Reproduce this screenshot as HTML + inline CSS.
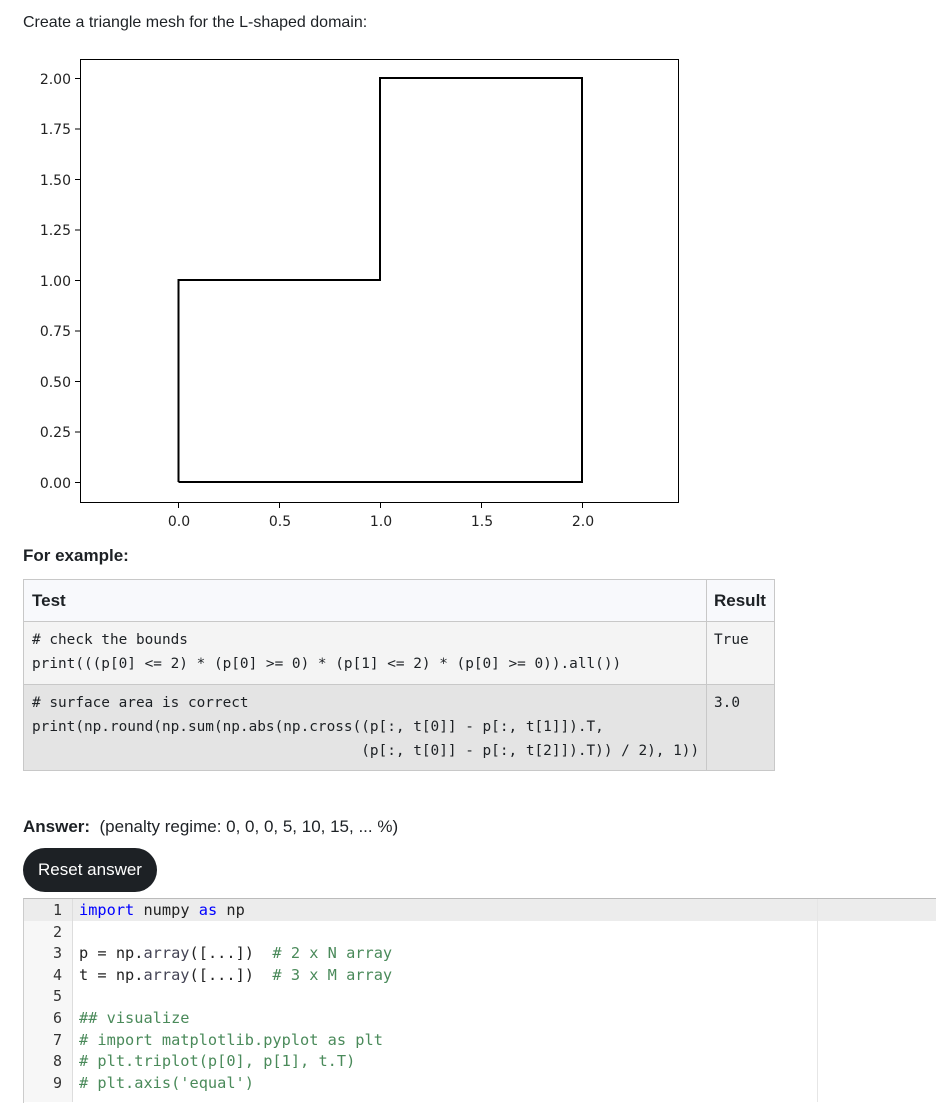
<!DOCTYPE html>
<html><head><meta charset="utf-8"><style>
body{margin:0;background:#fff;font-family:"Liberation Sans",sans-serif;color:#1d2125;width:936px;height:1102px;overflow:hidden;position:relative}
.a{position:absolute}
.mono{font-family:"DejaVu Sans Mono","Liberation Mono",monospace;font-size:14.4px}
table{border-collapse:collapse;table-layout:fixed}
td,th{overflow:hidden}
</style></head><body>
<div class="a" style="left:23px;top:14px;font-size:16px">Create a triangle mesh for the L-shaped domain:</div>
<svg class="a" style="left:0;top:50px" width="700" height="490" viewBox="0 50 700 490">
<rect x="80.5" y="59.5" width="598" height="443" fill="#fff" stroke="#000" stroke-width="1"/>
<polyline points="178.5,482 582,482 582,78 380,78 380,280 178.5,280 178.5,482" fill="none" stroke="#000" stroke-width="2"/>
<g stroke="#000" stroke-width="1">
<line x1="75" y1="78.5" x2="80" y2="78.5"/><line x1="75" y1="129" x2="80" y2="129"/><line x1="75" y1="179.5" x2="80" y2="179.5"/><line x1="75" y1="230" x2="80" y2="230"/><line x1="75" y1="280.5" x2="80" y2="280.5"/><line x1="75" y1="331" x2="80" y2="331"/><line x1="75" y1="381.5" x2="80" y2="381.5"/><line x1="75" y1="432" x2="80" y2="432"/><line x1="75" y1="482.5" x2="80" y2="482.5"/>
<line x1="178.5" y1="503" x2="178.5" y2="508"/><line x1="279.5" y1="503" x2="279.5" y2="508"/><line x1="380.5" y1="503" x2="380.5" y2="508"/><line x1="481.5" y1="503" x2="481.5" y2="508"/><line x1="582.5" y1="503" x2="582.5" y2="508"/>
</g>
<g font-family="DejaVu Sans,sans-serif" font-size="14" fill="#222" text-anchor="end">
<text x="71" y="84">2.00</text><text x="71" y="134">1.75</text><text x="71" y="185">1.50</text><text x="71" y="235">1.25</text><text x="71" y="286">1.00</text><text x="71" y="336">0.75</text><text x="71" y="387">0.50</text><text x="71" y="437">0.25</text><text x="71" y="488">0.00</text>
</g>
<g font-family="DejaVu Sans,sans-serif" font-size="14" fill="#222" text-anchor="middle">
<text x="179" y="526">0.0</text><text x="280" y="526">0.5</text><text x="381" y="526">1.0</text><text x="482" y="526">1.5</text><text x="583" y="526">2.0</text>
</g>
</svg>
<div class="a" style="left:23px;top:546px;font-size:17px;font-weight:bold">For example:</div>
<table class="a" style="left:23px;top:579px;width:751px">
<colgroup><col style="width:683px"><col style="width:68px"></colgroup>
<tr style="background:#f8f9fc;height:42px"><th style="border:1px solid #c8c8c8;text-align:left;padding:0 8px;font-size:17px">Test</th><th style="border:1px solid #c8c8c8;text-align:left;padding:0 7px;font-size:17px">Result</th></tr>
<tr style="background:#f4f4f4;vertical-align:top"><td class="mono" style="border:1px solid #c8c8c8;padding:6px 8px 8px;line-height:24px;white-space:pre"># check the bounds
print(((p[0] &lt;= 2) * (p[0] &gt;= 0) * (p[1] &lt;= 2) * (p[0] &gt;= 0)).all())</td><td class="mono" style="border:1px solid #c8c8c8;padding:6px 7px;line-height:24px">True</td></tr>
<tr style="background:#e4e4e4;vertical-align:top"><td class="mono" style="border:1px solid #c8c8c8;padding:6px 8px 7px;line-height:24px;white-space:pre"># surface area is correct
print(np.round(np.sum(np.abs(np.cross((p[:, t[0]] - p[:, t[1]]).T,
                                      (p[:, t[0]] - p[:, t[2]]).T)) / 2), 1))</td><td class="mono" style="border:1px solid #c8c8c8;padding:6px 7px;line-height:24px">3.0</td></tr>
</table>
<div class="a" style="left:23px;top:817px;font-size:17px"><b>Answer:</b>&nbsp; (penalty regime: 0, 0, 0, 5, 10, 15, ... %)</div>
<div class="a" style="left:23px;top:848px;width:134px;height:44px;border-radius:22px;background:#1d2125;color:#fff;font-size:17px;line-height:44px;text-align:center">Reset answer</div>
<div class="a" style="left:23px;top:898px;width:913px;height:204px;border-top:1px solid #bbb;border-left:1px solid #ccc"></div>
<div class="a" style="left:24px;top:899px;width:48px;height:203px;background:#f7f7f7"></div>
<div class="a" style="left:24px;top:899px;width:912px;height:22px;background:#ececec"></div>
<div class="a" style="left:72px;top:899px;width:1px;height:203px;background:#ddd"></div>
<div class="a" style="left:817px;top:899px;width:1px;height:203px;background:#e6e6e6"></div>
<div class="a mono" style="left:24px;top:900px;width:38px;text-align:right;line-height:21.6px;color:#333;font-size:15px">1<br>2<br>3<br>4<br>5<br>6<br>7<br>8<br>9</div>
<div class="a mono" style="left:79px;top:900px;line-height:21.6px;white-space:pre;color:#222;font-size:15.3px"><span style="color:#00f">import</span> numpy <span style="color:#00f">as</span> np

p = np.<span style="color:#445">array</span>([...])  <span style="color:#4a8a5a"># 2 x N array</span>
t = np.<span style="color:#445">array</span>([...])  <span style="color:#4a8a5a"># 3 x M array</span>

<span style="color:#4a8a5a">## visualize
# import matplotlib.pyplot as plt
# plt.triplot(p[0], p[1], t.T)
# plt.axis('equal')</span></div>
</body></html>
